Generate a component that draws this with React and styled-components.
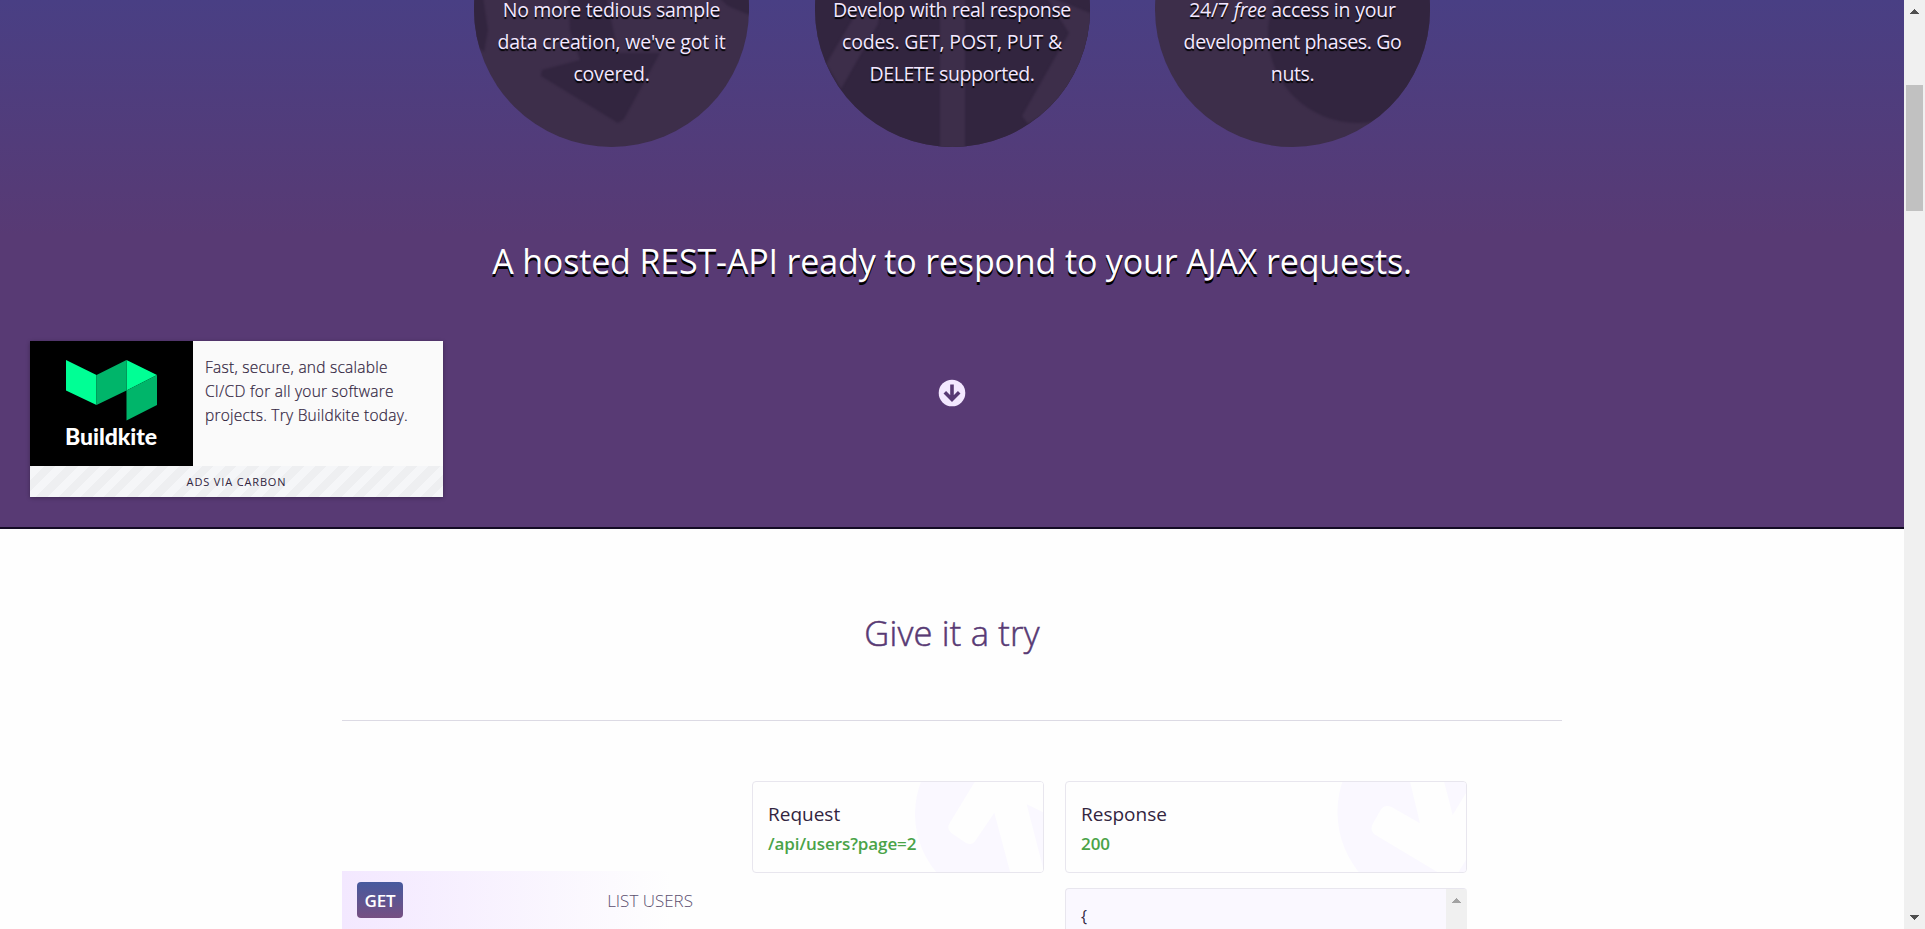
import React from "react";
import styled, { createGlobalStyle } from "styled-components";

const GlobalStyle = createGlobalStyle`
  *, *::before, *::after { box-sizing: border-box; }
  html, body { margin: 0; height: 100%; overflow: hidden; }
  body {
    font-family: "Open Sans", "Noto Sans", sans-serif;
    color: #32253f;
    background: #fefefe;
  }
  h2, p, ul, pre { margin: 0; padding: 0; font-weight: inherit; }
`;

const Viewport = styled.div`
  display: flex;
  height: 929px;
  overflow: hidden;
`;

const Page = styled.main`
  position: relative;
  flex: 1;
  min-width: 0;
`;

const Hero = styled.section`
  display: flex;
  flex-direction: column;
  align-items: center;
  height: 529px;
  border-bottom: 2px solid #130b24;
  background: linear-gradient(#493f84 0, #583a74 235px);
`;

const Features = styled.div`
  display: flex;
  align-items: flex-end;
  gap: 65.5px;
  height: 147px;
`;

const Feature = styled.div`
  position: relative;
  flex: none;
  display: flex;
  flex-direction: column;
  justify-content: flex-end;
  width: 275px;
  height: 275px;
  padding-bottom: 57px;
  border-radius: 50%;
  overflow: hidden;
  background: #3d2e4a;
`;

const FeatureArt = styled.svg`
  position: absolute;
  inset: 0;
  width: 275px;
  height: 275px;
`;

const ArtShape = styled.path`
  fill: ${(p) => (p.$light ? "#3d2e4a" : "#32253f")};
  filter: blur(1px);
`;

const FeatureText = styled.p`
  position: relative;
  text-align: center;
  font-size: 19.5px;
  line-height: 32px;
  color: #f3e8ff;
  text-shadow: 0 2px 1px #000;
  white-space: nowrap;
`;

const Line = styled.span`
  display: block;
  letter-spacing: ${(p) => p.$track}px;
`;

const Tagline = styled.h2`
  margin-top: 88px;
  font-size: 34px;
  line-height: 52px;
  letter-spacing: -0.15px;
  color: #fff;
  text-shadow: 0 3px 0 #000;
  white-space: nowrap;
`;

const ScrollCue = styled.svg`
  width: 28px;
  height: 28px;
  margin-top: 92px;
`;

const Ad = styled.aside`
  position: absolute;
  left: 30px;
  top: 341px;
  width: 413px;
  background: #fafafa;
  box-shadow: 0 1px 4px rgba(0, 0, 0, 0.3);
`;

const AdBody = styled.div`
  display: flex;
  height: 125px;
`;

const AdLogo = styled.svg`
  flex: none;
  width: 163px;
  height: 125px;
  background: #000;
`;

const AdCopy = styled.p`
  padding: 14px 0 0 12px;
  font-size: 15.5px;
  line-height: 24px;
  font-weight: 300;
  letter-spacing: 0.25px;
  -webkit-text-stroke: 0.2px currentColor;
  white-space: nowrap;
`;

const AdFooter = styled.div`
  height: 31px;
  text-align: center;
  font-size: 11px;
  line-height: 32px;
  letter-spacing: 0.85px;
  background: repeating-linear-gradient(-45deg, #f5f6f8 0 8px, #eeeff1 8px 16px);
`;

const Try = styled.section`
  width: 1220px;
  margin: 0 auto;
`;

const TryTitle = styled.h2`
  padding: 78px 0 61px;
  text-align: center;
  font-size: 34.5px;
  line-height: 52px;
  font-weight: 300;
  letter-spacing: 0.2px;
  -webkit-text-stroke: 0.5px currentColor;
  color: #583a74;
  border-bottom: 1px solid #dcdae4;
`;

const Console = styled.div`
  display: flex;
  align-items: flex-start;
  padding-top: 60px;
`;

const Endpoints = styled.ul`
  width: 410px;
  padding-top: 90px;
  list-style: none;
`;

const Endpoint = styled.li`
  display: flex;
  justify-content: space-between;
  align-items: center;
  width: 366px;
  height: 58px;
  padding: 0 15px;
  background: linear-gradient(90deg, #f3e8ff, #fefefe 90%);
`;

const Method = styled.span`
  width: 46px;
  height: 36px;
  border-radius: 4px;
  text-align: center;
  font-size: 17px;
  line-height: 37px;
  font-weight: 600;
  letter-spacing: -0.2px;
  color: #fff;
  background: linear-gradient(#465a9e, #764f82);
`;

const EndpointName = styled.span`
  font-size: 17px;
  font-weight: 300;
  color: #5c5070;
`;

const Column = styled.div`
  width: ${(p) => p.$width}px;
  margin-right: 21px;
`;

const Panel = styled.div`
  position: relative;
  height: 92px;
  padding: 17px 15px;
  border: 1px solid #e8e6ee;
  border-radius: 4px;
  overflow: hidden;
`;

const PanelArt = styled.svg`
  position: absolute;
  top: -1px;
  right: -1px;
  height: 92px;
  width: 132px;
`;

const PanelTitle = styled.p`
  position: relative;
  font-size: 19px;
  line-height: 30px;
  font-weight: 500;
`;

const PanelValue = styled.p`
  position: relative;
  font-size: 17px;
  line-height: 30px;
  font-weight: 600;
  letter-spacing: -0.08px;
  color: #4aa348;
`;

const Output = styled.div`
  display: flex;
  justify-content: space-between;
  height: 80px;
  margin-top: 15px;
  border: 1px solid #e8e6ee;
  border-right: 0;
  border-radius: 4px;
  overflow: hidden;
  background: #faf8ff;
`;

const Code = styled.pre`
  padding: 15px 15px;
  font: 16px/24px "Open Sans", sans-serif;
`;

const OutputTrack = styled.div`
  width: 21px;
  padding-top: 9px;
  background: #f0f0f0;
  display: flex;
  justify-content: center;
`;

const PageTrack = styled.div`
  display: flex;
  flex-direction: column;
  align-items: center;
  width: 21px;
  padding: 9px 0;
  background: #f0f0f0;
`;

const Thumb = styled.div`
  width: 17px;
  height: 126px;
  margin: 71px 0 auto;
  background: #c1c1c1;
`;

const Arrow = styled.svg`
  flex: none;
  width: 9px;
  height: 5px;
`;

const ArrowUp = ({ fill }) => (
  <Arrow viewBox="0 0 9 5" shapeRendering="crispEdges">
    <path d="M4.5 0 9 5H0z" fill={fill} />
  </Arrow>
);

export default function App() {
  return (
    <>
      <GlobalStyle />
      <Viewport>
        <Page>
          <Hero>
            <Features>
              <Feature>
                <FeatureArt viewBox="474 -128 275 275">
                  <ArtShape d="M565 -60 607 0 618 53 660 53 624 119 618 123 541 76 542 70 580 60 570 30zM470 -30 482 -10 488 30 484 52 470 40zM700 -20 760 -20 752 16 728 6z" />
                </FeatureArt>
                <FeatureText>
                  <Line $track={-0.3}>No more tedious sample</Line>
                  <Line $track={-0.17}>data creation, we've got it</Line>
                  <Line $track={-0.2}>covered.</Line>
                </FeatureText>
              </Feature>
              <Feature>
                <FeatureArt viewBox="815 -128 275 275">
                  <rect x="815" y="-128" width="275" height="275" fill="#32253f" />
                  <ArtShape $light d="M940 -20H965V160H940zM857 12 880 8 878 24 841 89 826 64zM1045 -5 1069 33 1022 116 1028 124 1060 105 1095 50 1095 15z" />
                </FeatureArt>
                <FeatureText>
                  <Line $track={-0.36}>Develop with real response</Line>
                  <Line $track={-0.16}>codes. GET, POST, PUT &amp;</Line>
                  <Line $track={-0.45}>DELETE supported.</Line>
                </FeatureText>
              </Feature>
              <Feature>
                <FeatureArt viewBox="1155 -128 275 275">
                  <ArtShape d="M1268 34a90 89 0 0 0 180 0a90 89 0 0 0-180 0z" />
                </FeatureArt>
                <FeatureText>
                  <Line $track={-0.2}>24/7 <em>free</em> access in your</Line>
                  <Line $track={-0.35}>development phases. Go</Line>
                  <Line $track={-0.4}>nuts.</Line>
                </FeatureText>
              </Feature>
            </Features>
            <Tagline>A hosted REST-API ready to respond to your AJAX requests.</Tagline>
            <ScrollCue viewBox="0 0 28 28">
              <circle cx="14" cy="14" r="13.3" fill="#f3e8ff" />
              <path d="M14 5.5V20M6.8 13.2 14 20.4 21.2 13.2" fill="none" stroke="#583a74" strokeWidth="3.6" />
            </ScrollCue>
          </Hero>
          <Try>
            <TryTitle>Give it a try</TryTitle>
            <Console>
              <Endpoints>
                <Endpoint>
                  <Method>GET</Method>
                  <EndpointName>LIST USERS</EndpointName>
                </Endpoint>
              </Endpoints>
              <Column $width={292}>
                <Panel>
                  <PanelArt viewBox="912 781 132 92">
                    <circle cx="1005" cy="814" r="90" fill="#faf8ff" />
                    <path transform="translate(740 770) scale(.33333)" d="M710 26 627 163Q620 178 634 189L678 219Q696 227 706 212L763 128 812 312H914L860 103 916 130V26z" fill="#fefefe" />
                  </PanelArt>
                  <PanelTitle>Request</PanelTitle>
                  <PanelValue>/api/users?page=2</PanelValue>
                </Panel>
              </Column>
              <Column $width={402}>
                <Panel>
                  <PanelArt viewBox="1335 781 132 92">
                    <circle cx="1433" cy="812" r="95.5" fill="#faf8ff" />
                    <path transform="translate(1050 770) scale(.33333)" d="M1078 26 1110 160 1026 112Q1006 101 993 118L968 162Q958 184 978 196L1172 312H1222L1256 256V56L1208 135 1180 26z" fill="#fefefe" />
                  </PanelArt>
                  <PanelTitle>Response</PanelTitle>
                  <PanelValue>200</PanelValue>
                </Panel>
                <Output>
                  <Code>{"{"}</Code>
                  <OutputTrack><ArrowUp fill="#a3a3a3" /></OutputTrack>
                </Output>
              </Column>
            </Console>
          </Try>
          <Ad>
            <AdBody>
              <AdLogo viewBox="0 0 163 125">
                <path d="M36 19 66.500 34V64L36 49.500zM96.500 19 127 34 96.500 49.500z" fill="#00ff95" />
                <path d="M66.500 34 96.500 19V49.500L66.500 64zM96.500 49.500 127 34V64L96.500 79.500z" fill="#00b56a" />
                <text x="35" y="104" fill="#fff" fontFamily="Lato" fontSize="23" fontWeight="900" textLength="92">Buildkite</text>
              </AdLogo>
              <AdCopy>Fast, secure, and scalable<br />CI/CD for all your software<br />projects. Try Buildkite today.</AdCopy>
            </AdBody>
            <AdFooter>ADS VIA CARBON</AdFooter>
          </Ad>
        </Page>
        <PageTrack>
          <ArrowUp fill="#505050" />
          <Thumb />
          <Arrow viewBox="0 0 9 5" shapeRendering="crispEdges">
            <path d="M0 0H9L4.500 5z" fill="#505050" />
          </Arrow>
        </PageTrack>
      </Viewport>
    </>
  );
}
